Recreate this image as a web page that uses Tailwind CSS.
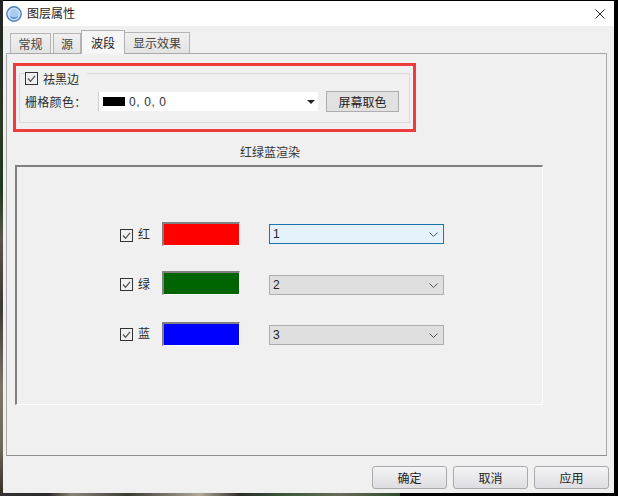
<!DOCTYPE html>
<html lang="zh-CN">
<head>
<meta charset="utf-8">
<script src="https://cdn.jsdelivr.net/npm/@tailwindcss/browser@4"></script>
</head>
<body class="m-0 overflow-hidden bg-black">
<div class="relative flex h-[496px] w-[618px] overflow-hidden bg-black pt-px font-['Noto_Sans_CJK_SC','Liberation_Sans',sans-serif] text-[12px] leading-none text-[#2a2a2a]">
  <!-- desktop wallpaper showing around the window -->
  <div class="absolute left-0 top-0 h-[496px] w-[3px] bg-[linear-gradient(180deg,#222_0%,#2c3a24_25%,#1d3a1d_38%,#5a5548_48%,#3c3a34_62%,#7a7666_78%,#6c6a58_90%,#332c24_100%)]"></div>
  <div class="absolute bottom-0 left-0 h-[3px] w-[400px] bg-[linear-gradient(90deg,#333_0%,#2a2a2a_12%,#8a8478_18%,#3a3a34_32%,#b0a898_50%,#2c2c2a_60%,#3c5a3c_72%,#6a6a5a_85%,#2c4a2c_100%)]"></div>

  <div class="relative ml-[3px] flex h-[492px] w-[611px] flex-col bg-[#f0f0f0]">
    <!-- title bar -->
    <div class="flex h-[25px] shrink-0 items-center bg-white pl-[3px] pr-[9px]">
      <svg class="h-[16px] w-[16px] shrink-0" viewBox="0 0 16 16">
        <circle cx="8" cy="8" r="7.2" fill="#cfe0f2" stroke="#4a7fc0" stroke-width="1.4"/>
        <circle cx="8" cy="7.5" r="4.4" fill="#a9cdf0"/>
        <path d="M3.5 9.5c2 2.2 7 2.2 9 0-.6 2.4-2.4 3.6-4.5 3.6S4.100 11.900 3.500 9.500z" fill="#5f93d3"/>
      </svg>
      <span class="-mt-[2px] ml-[5px] text-[12px] text-[#222]">图层属性</span>
      <svg class="ml-auto h-[10px] w-[10px]" viewBox="0 0 10 10" fill="none" stroke="#222" stroke-width="1">
        <path d="M0.500 0.500l9 9M9.500 0.500l-9 9"/>
      </svg>
    </div>

    <!-- tabs -->
    <div class="relative z-10 -mb-px mt-[4px] flex h-[24px] shrink-0 items-end pl-[7px]">
      <div class="mb-px mr-[2px] flex h-[20px] w-[41px] items-center justify-center border border-b-0 border-[#b5b5b5] bg-[linear-gradient(180deg,#f0f0f0,#e3e3e3)] text-[#444]">常规</div>
      <div class="mb-px flex h-[20px] w-[28px] items-center justify-center border border-b-0 border-[#b5b5b5] bg-[linear-gradient(180deg,#f0f0f0,#e3e3e3)] text-[#444]">源</div>
      <div class="flex h-[24px] w-[44px] items-center justify-center border border-b-0 border-[#b0b0b0] bg-[#f6f6f6] text-[#222]">波段</div>
      <div class="mb-px flex h-[21px] w-[65px] items-center justify-center border border-b-0 border-l-0 border-[#b5b5b5] bg-[linear-gradient(180deg,#f0f0f0,#e3e3e3)] text-[#444]">显示效果</div>
    </div>

    <!-- tab pane -->
    <div class="ml-[3px] h-[403px] w-[601px] shrink-0 border border-[#a8a8a8] border-b-[#8e8e8e] bg-[#f0f0f0]">
      <!-- group box -->
      <div class="ml-[12px] mt-[19px] h-[50px] w-[391px] border border-[#dcdcdc] pl-[5px]">
        <div class="-mt-[2px] flex h-[13px] w-[62px] items-center bg-[#f0f0f0]">
          <svg class="h-[13px] w-[13px] shrink-0" viewBox="0 0 13 13" fill="none">
            <rect x="0.500" y="0.500" width="12" height="12" stroke="#333"/>
            <path d="M3 6.500l2.500 2.800L10 3.800" stroke="#555" stroke-width="1.300"/>
          </svg>
          <span class="ml-[5px] shrink-0">祛黑边</span>
        </div>
        <div class="mt-[6px] flex h-[21px] items-center">
          <span class="w-[73px] shrink-0 tracking-[0.3px]">栅格颜色：</span>
          <div class="flex h-[19px] w-[220px] items-center border-l border-[#d0d0d0] bg-white pl-[4px]">
            <span class="h-[9px] w-[22px] shrink-0 bg-black"></span>
            <span class="ml-[4px] font-['Liberation_Sans',sans-serif] text-[12px] tracking-[0.6px] text-[#333]">0, 0, 0</span>
            <svg class="ml-auto mr-[3px] h-[4px] w-[8px]" viewBox="0 0 8 4"><path d="M0 0h8L4 4z" fill="#222"/></svg>
          </div>
          <div class="ml-[8px] flex h-[21px] w-[73px] items-center justify-center border border-[#adadad] bg-[#e1e1e1] text-[#222]">屏幕取色</div>
        </div>
      </div>

      <!-- render title -->
      <div class="ml-[233px] mt-[21px] flex h-[16px] items-center text-[#333]">红绿蓝渲染</div>

      <!-- render frame -->
      <div class="ml-[8px] mt-[5px] h-[240px] w-[528px] border-2 border-b border-r border-[#808080] border-b-white border-r-[#fafafa] pl-[103px] pt-[55px]">
        <div class="flex h-[24px] items-start">
          <svg class="mt-[7px] h-[13px] w-[13px] shrink-0" viewBox="0 0 13 13" fill="none"><rect x="0.500" y="0.500" width="12" height="12" stroke="#333"/><path d="M3 6.500l2.500 2.800L10 3.800" stroke="#555" stroke-width="1.300"/></svg>
          <span class="ml-[5px] mt-[6px] w-[12px]">红</span>
          <div class="ml-[12px] h-[24px] w-[78px] shrink-0 border-2 border-b border-r border-[#808080] border-b-white border-r-white bg-[#ff0000]"></div>
          <div class="ml-[29px] mt-[2px] flex h-[20px] w-[175px] items-center border border-[#1a74ad] bg-[#e5f1fb] pl-[3px] pr-[5px] font-['Liberation_Sans',sans-serif] text-[#222]">
            1
            <svg class="ml-auto h-[5px] w-[9px]" viewBox="0 0 9 5" fill="none" stroke="#555"><path d="M0.500 0.500l4 4 4-4"/></svg>
          </div>
        </div>
        <div class="mt-[25px] flex h-[24px] items-start">
          <svg class="mt-[7px] h-[13px] w-[13px] shrink-0" viewBox="0 0 13 13" fill="none"><rect x="0.500" y="0.500" width="12" height="12" stroke="#333"/><path d="M3 6.500l2.500 2.800L10 3.800" stroke="#555" stroke-width="1.300"/></svg>
          <span class="ml-[5px] mt-[7px] w-[12px]">绿</span>
          <div class="ml-[12px] h-[24px] w-[78px] shrink-0 border-2 border-b border-r border-[#808080] border-b-white border-r-white bg-[#006400]"></div>
          <div class="ml-[29px] mt-[4px] flex h-[20px] w-[175px] items-center border border-[#adadad] bg-[#dfdfdf] pl-[3px] pr-[5px] font-['Liberation_Sans',sans-serif] text-[#222]">
            2
            <svg class="ml-auto h-[5px] w-[9px]" viewBox="0 0 9 5" fill="none" stroke="#555"><path d="M0.500 0.500l4 4 4-4"/></svg>
          </div>
        </div>
        <div class="mt-[27px] flex h-[24px] items-start">
          <svg class="mt-[6px] h-[13px] w-[13px] shrink-0" viewBox="0 0 13 13" fill="none"><rect x="0.500" y="0.500" width="12" height="12" stroke="#333"/><path d="M3 6.500l2.500 2.800L10 3.800" stroke="#555" stroke-width="1.300"/></svg>
          <span class="ml-[5px] mt-[5px] w-[12px]">蓝</span>
          <div class="ml-[12px] h-[24px] w-[78px] shrink-0 border-2 border-b border-r border-[#808080] border-b-white border-r-white bg-[#0000ff]"></div>
          <div class="ml-[29px] mt-[3px] flex h-[20px] w-[175px] items-center border border-[#adadad] bg-[#dfdfdf] pl-[3px] pr-[5px] font-['Liberation_Sans',sans-serif] text-[#222]">
            3
            <svg class="ml-auto h-[5px] w-[9px]" viewBox="0 0 9 5" fill="none" stroke="#555"><path d="M0.500 0.500l4 4 4-4"/></svg>
          </div>
        </div>
      </div>
    </div>

    <!-- dialog buttons -->
    <div class="flex justify-end gap-[6px] pr-[5px] pt-[10px]">
      <div class="flex h-[23px] w-[75px] items-center justify-center rounded-[3px] border border-[#a9a9a9] bg-[linear-gradient(180deg,#f4f4f6,#dedee2)] text-[#222]">确定</div>
      <div class="flex h-[23px] w-[75px] items-center justify-center rounded-[3px] border border-[#a9a9a9] bg-[linear-gradient(180deg,#f4f4f6,#dedee2)] text-[#222]">取消</div>
      <div class="flex h-[23px] w-[75px] items-center justify-center rounded-[3px] border border-[#a9a9a9] bg-[linear-gradient(180deg,#f4f4f6,#dedee2)] text-[#222]">应用</div>
    </div>
  </div>

  <!-- red annotation drawn over the screenshot -->
  <div class="absolute left-[13px] top-[63px] h-[69px] w-[403px] border-[3px] border-[#ee3b3b]"></div>
</div>
</body>
</html>
